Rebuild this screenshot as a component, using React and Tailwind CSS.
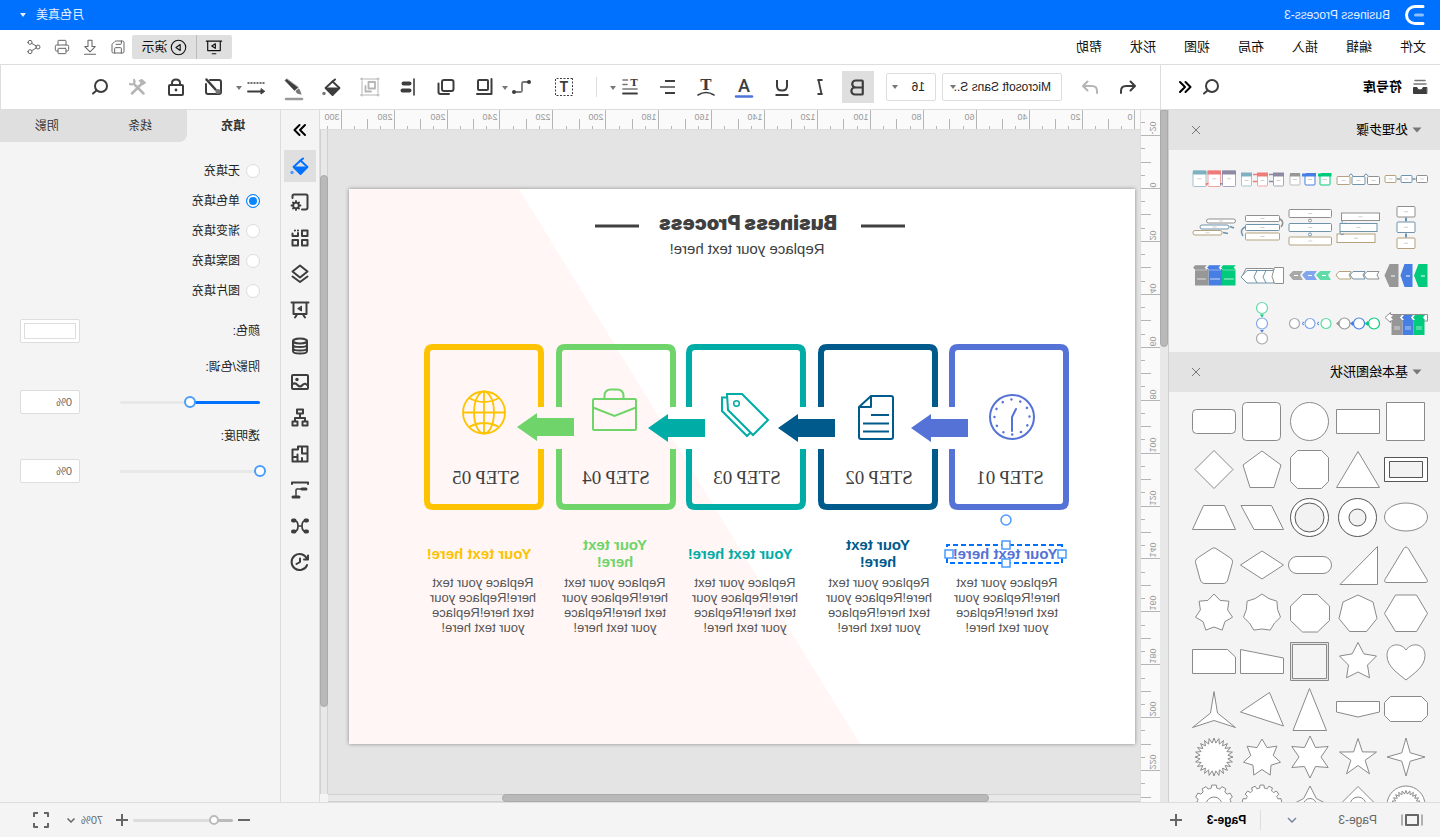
import React, { useState } from 'react';
import { Bold, Italic, Save, Printer, Share2 } from 'lucide-react';

const menus = ['文件', '编辑', '插入', '布局', '视图', '形状', '帮助'];
const fillTypes = ['无填充', '单色填充', '渐变填充', '图案填充', '图片填充'];

const Ico = ({ children, size = 20, className = '' }) => (
  <svg width={size} height={size} viewBox="0 0 20 20" fill="none" stroke="currentColor" strokeWidth="2" strokeLinecap="round" strokeLinejoin="round" className={`shrink-0 overflow-visible ${className}`}>
    {children}
  </svg>
);

const Caret = ({ className = '' }) => (
  <svg width="6" height="4" viewBox="0 0 6 4" fill="currentColor" className={`shrink-0 ${className}`}><path d="M0 0h6L3 4z" /></svg>
);

const SearchIcon = () => (
  <Ico><circle cx="9" cy="9" r="6" /><path d="m13.5 13.5 3.5 3" /></Ico>
);

const Bucket = ({ dot }) => (
  <Ico>
    <path d="m2.500 11 7-6.500 7 6.500-7 7z" strokeWidth="1.800" />
    <path d="M3 11h13l-6.500 7z" fill="currentColor" strokeWidth="1" />
    <path d="M7 2.500 10 5" />
    <circle cx="18" cy="16.500" r="1.700" fill={dot} stroke="none" />
  </Ico>
);

// ---------- top toolbar ----------

const tools = [
  { name: 'Bold', active: true, icon: <Bold size={21} strokeWidth={2.5} /> },
  { name: 'Italic', icon: <Ico><path d="M7.500 3h5M7.500 17h5" strokeWidth="1.800" strokeLinecap="butt" /><path d="M11.500 3 8.500 17" strokeWidth="1.800" /></Ico> },
  { name: 'Underline', icon: <Ico><path d="M5 3v6q0 4.500 5 4.500T15 9V3" strokeLinecap="butt" /><path d="M3.500 18h13" strokeLinecap="butt" /></Ico> },
  { name: 'Font color', icon: (
    <Ico>
      <text x="10" y="15" textAnchor="middle" fontFamily="Roboto" fontSize="18" fontWeight="500" fill="currentColor" stroke="none">A</text>
      <path d="M2 19.500h16" stroke="#4f73d9" strokeWidth="2.500" />
    </Ico>
  ) },
  { name: 'Text path', icon: (
    <Ico>
      <text x="10" y="13" textAnchor="middle" fontFamily="DejaVu Serif" fontSize="15" fontWeight="700" fill="currentColor" stroke="none">T</text>
      <path d="M2 18q8-5 16 0" strokeWidth="1.600" />
    </Ico>
  ) },
  { name: 'Align text', icon: <Ico><path d="M3 4h10M3 16h10" strokeLinecap="butt" /><path d="M3 10h15" stroke="#777" strokeLinecap="butt" /></Ico> },
  { name: 'Line spacing', caret: true, icon: (
    <Ico>
      <text x="6" y="9" textAnchor="middle" fontFamily="DejaVu Serif" fontSize="10" fontWeight="700" fill="currentColor" stroke="none">T</text>
      <path d="M12.500 3H17M13 7.500h4M3 12h14" stroke="#777" strokeWidth="1.600" />
      <path d="M3 16.500h14" strokeWidth="1.800" />
    </Ico>
  ) },
  { name: 'divider' },
  { name: 'Text box', icon: (
    <Ico>
      <rect x="1.500" y="1.500" width="17" height="17" strokeWidth="1" strokeDasharray="2 1.500" strokeLinecap="butt" />
      <text x="10" y="15" textAnchor="middle" fontFamily="Roboto" fontSize="14" fontWeight="700" fill="currentColor" stroke="none">T</text>
    </Ico>
  ) },
  { name: 'Connector', caret: true, spaced: true, icon: (
    <Ico>
      <path d="M4 5h4.500q1.500 0 1.500 1.500v7q0 1.500 1.500 1.500h6" stroke="#777" strokeWidth="1.800" />
      <g fill="currentColor" stroke="none"><circle cx="3" cy="5" r="2" /><circle cx="18" cy="15" r="2" /></g>
    </Ico>
  ) },
  { name: 'Bring forward', icon: <Ico><rect x="6" y="3" width="10" height="10" rx="1" /><path d="M2.500 2v15H17" /></Ico> },
  { name: 'Send backward', icon: <Ico><rect x="2.500" y="3" width="11.500" height="11" rx="2" /><path d="M17.500 6.500V15q0 2-2 2H7" /></Ico> },
  { name: 'Align', icon: (
    <Ico>
      <path d="M4 2v16" strokeWidth="1.600" />
      <path d="M8.500 6.500h6M8.500 13.500h7" strokeWidth="4" />
    </Ico>
  ) },
  { name: 'Group', faded: true, icon: (
    <Ico>
      <path d="M4 2h12M4 18h12M2 4v12M18 4v12" strokeWidth="1" />
      <g strokeWidth="1"><circle cx="2" cy="2" r="1" /><circle cx="18" cy="2" r="1" /><circle cx="2" cy="18" r="1" /><circle cx="18" cy="18" r="1" /></g>
      <path d="M5 5h6.500v6.500H5z" strokeWidth="1.800" />
      <path d="M14.500 9v5.500H9" strokeWidth="1.800" />
    </Ico>
  ) },
  { name: 'Fill', icon: <Bucket dot="#777" /> },
  { name: 'Line', icon: (
    <Ico>
      <path d="M17.500 2 19 3.500 9.500 13.500l-3.500-3z" fill="currentColor" strokeWidth="0.500" />
      <path d="M5.500 11.500 8.500 14c-.5 2.500-3 3.500-6.500 3.500 1.500-1.500 1-4 3.500-6z" fill="#777" stroke="none" />
      <path d="M2 22h16" stroke="#999" strokeWidth="2.500" />
    </Ico>
  ) },
  { name: 'Line style', caret: true, icon: (
    <Ico>
      <path d="M1.500 6h17" strokeWidth="1.600" strokeDasharray="2 1" strokeLinecap="butt" />
      <path d="M18 14.500H4" strokeWidth="1.800" />
      <path d="M5 12v5l-3.500-2.500z" fill="currentColor" strokeWidth="1" />
    </Ico>
  ) },
  { name: 'Style', spaced: true, icon: (
    <Ico>
      <path d="M14 3H5Q3 3 3 5v10q0 2 2 2h11q2 0 2-2V7" />
      <path d="M17.500 2.500 8.500 12.500" strokeWidth="2.500" />
      <circle cx="6" cy="14.500" r="2.500" fill="#777" stroke="none" />
    </Ico>
  ) },
  { name: 'Lock', icon: (
    <Ico>
      <rect x="3" y="8" width="14" height="10" rx="1" />
      <path d="M6 8V6q0-3.500 4-3.500T14 6v2" />
      <circle cx="10" cy="13" r="1.400" fill="currentColor" stroke="none" />
    </Ico>
  ) },
  { name: 'Tools', faded: true, icon: (
    <Ico>
      <path d="M5.500 6 16 16.500M13 8l-8.500 8.500" strokeWidth="2.500" />
      <path d="M2.500 5.500 6 2.500l3 1-3.500 4z" fill="currentColor" strokeWidth="1" />
      <path d="M14 3c-1.500 3 1 5.500 4 4" strokeWidth="2.200" />
    </Ico>
  ) },
  { name: 'Find', icon: <SearchIcon /> },
];

// ---------- symbol library ----------

const G = '#8f8f8f';
const S = '#6e93aa';
const T = '#b3a27d';
const GREEN = '#00ca7c';
const BLUE = '#477ee3';
const GRAY = '#979797';

const Box = ({ x, y, w, h, c, r = 1, f = '#fff' }) => (
  <g>
    <rect x={x} y={y} width={w} height={h} rx={r} fill={f} stroke={c} />
    <path d={`M${x + w / 2 - 2} ${y + h / 2}h4`} stroke="#bbb" strokeWidth="0.700" />
  </g>
);

const Ring = ({ x, y, c, r = 5.5 }) => <circle cx={x} cy={y} r={r} fill="#fff" stroke={c} strokeWidth="1.200" />;

const processShapes = [
  <g><Box x={2.5} y={20.5} w={11} h={7} c={G} /><Box x={18} y={20.5} w={11} h={7} c={S} /><Box x={34} y={20.5} w={11} h={7} c={T} /><path d="M14.500 24h3M30 24h3" stroke={S} strokeWidth="1.500" /></g>,
  <g><Box x={2.5} y={21.500} w={12} h={8} c={G} /><Box x={17} y={21.500} w={13} h={8} c={S} /><Box x={32} y={21.500} w={13} h={8} c={T} /><path d="M14 21q2-4 4 0M29 21q2-4 4 0" stroke={S} fill="none" /></g>,
  <g>
    <Box x={4} y={19} w={10} h={11} c={GREEN} /><Box x={19} y={19} w={10} h={11} c={BLUE} /><Box x={34} y={19} w={10} h={11} c="#bbb" />
    <path d="M2.500 18h10v3.500h-10zM12 18.500h4v3h-4z" fill={GREEN} /><path d="M18 18h10v3.500H18zM27 18.500h5v3h-5z" fill={BLUE} /><path d="M34 18h10v3.500H34z" fill={GRAY} />
  </g>,
  <g>
    <Box x={2.5} y={20} w={10} h={11} c="#a9a5b8" /><Box x={18.500} y={20} w={10} h={11} c="#f2a3a1" /><Box x={34.500} y={20} w={10} h={11} c="#a3c3d1" />
    <path d="M2 17.500h11v4H2z" fill="#8f8aa3" /><path d="M18 17.500h11v4H18z" fill="#ef7b78" /><path d="M34 17.500h11v4H34z" fill="#7fb0c2" />
    <path d="M13 19.500h4M13 26.500h4" stroke="#8f8aa3" strokeWidth="1.500" /><path d="M29 19.500h4M29 26.500h4" stroke="#ef7b78" strokeWidth="1.500" />
  </g>,
  <g>
    <Box x={2.5} y={16} w={13} h={15.500} c="#a9a5b8" /><Box x={17.500} y={16} w={12.500} h={15.500} c="#f2a3a1" /><Box x={32} y={16} w={13} h={15.500} c="#a3c3d1" />
    <path d="M2 15.500h14v4H2z" fill="#8f8aa3" /><path d="M17 15.500h13.500v4H17z" fill="#ef7b78" /><path d="M31.500 15.500H45v4H31.500z" fill="#7fb0c2" />
    <path d="M15 28h3v3z" fill="#8f8aa3" /><path d="M29 28h3v3z" fill="#ef7b78" />
  </g>,
  <g><Box x={15} y={3.500} w={18} h={10.500} c={G} /><Box x={15} y={19} w={18} h={10.500} c={S} /><Box x={15} y={35} w={18} h={10.500} c={T} /><path d="M24 14.500v4M24 30.500v4" stroke={S} strokeWidth="2" /></g>,
  <g><Box x={2.5} y={10} w={38} h={7.500} c={G} r={0} /><Box x={5} y={20.500} w={37} h={8} c={S} r={0} /><Box x={7} y={31} w={38} h={8.500} c={T} r={0} /><path d="M36 20q4 2 4-2M38 31q4 2 4-2" stroke={S} fill="none" /></g>,
  <g><Box x={2.5} y={6.500} w={42.500} h={8} c={G} /><Box x={2.5} y={20.500} w={42.500} h={8} c={S} /><Box x={2.5} y={34} w={42.500} h={8} c={T} /><circle cx="24" cy="17.500" r="1.500" fill="#fff" stroke={G} /><circle cx="24" cy="31.500" r="1.500" fill="#fff" stroke={S} /></g>,
  <g><Box x={6.500} y={12.500} w={34} h={6} c={G} /><Box x={6.500} y={21.500} w={34} h={6} c={S} /><Box x={6.500} y={30} w={34} h={7} c={T} /><path d="M6 16q-5 3-1 8" stroke={G} fill="none" strokeWidth="1.500" /><path d="M41 24q6 3 2 9" stroke={S} fill="none" strokeWidth="1.500" /></g>,
  <g><Box x={2.5} y={16} w={29} h={4} c={G} r={2} /><Box x={9} y={22} w={29} h={4} c={S} r={2} /><Box x={16} y={27.500} w={29} h={4.500} c={T} r={2} /><path d="M4 25l4-1.500M10 30.500l5-1" stroke={S} strokeWidth="1.500" /></g>,
  <g><path d="M2.500 13h9l4.500 11.500-4.500 11.500h-9z" fill={GREEN} /><path d="M17.500 13h8l4 11.500-4 11.500h-8z" fill={BLUE} /><path d="M31.500 13h9l5 11.500-5 11.500h-9z" fill={GRAY} /><path d="M5 25h4M20 25h4M35 25h4" stroke="#fff" /></g>,
  <g fill="#fff"><path d="M3 20.500h12l3 3.500-3 4H3l2-4z" stroke={G} /><path d="M17 20.500h12l3 3.500-3 4H17l2-4z" stroke={S} /><path d="M31 20.500h12l3 3.500-3 4H31l2-4z" stroke={T} /></g>,
  <g><path d="M3 20h11l4 4-4 5H3l3-5z" fill="#5fdca7" /><path d="M17 20h11l4 4-4 5H17l3-5z" fill="#7fa6ee" /><path d="M31 20h10l4 4-4 5H31l3-5z" fill="#a8a8a8" /><path d="M8 24.500h4M22 24.500h4M36 24.500h4" stroke="#fff" /></g>,
  <g fill="#fff"><path d="M13 17.500h27l4 8H11z" stroke={G} /><path d="M12 19.500h27l6 6.500-6 6H12z" stroke={S} /><path d="M2.500 16.500h9l2.500 9-2.500 7h-9z" stroke={G} /><path d="m20 19.500 3 6.500-3 6M29 19.500l3 6.500-3 6" fill="none" stroke={S} /></g>,
  <g><path d="M2.500 18h13.500v16.500H2.500z" fill={GREEN} /><path d="M16 18h13.500v16.500H16z" fill={BLUE} /><path d="M29.500 18H43v16.500H29.500z" fill={GRAY} /><path d="M2 14h13l2 2.500-2 2.500H2l2-2.500z" fill={GREEN} stroke="#fff" strokeWidth=".4" /><path d="M17 14h12l2 2.500-2 2.500H17l2-2.500z" fill={BLUE} stroke="#fff" strokeWidth=".4" /><path d="M31 14h12l2 2.500-2 2.500H31l2-2.500z" fill={GRAY} stroke="#fff" strokeWidth=".4" /><path d="M4 28h10M18 28h10M32 28h9" stroke="#fff" strokeWidth=".7" /></g>,
  <g><path d="M2.500 15.500h37v-2l5.500 5-5.500 5v-1.500h-37z" fill="#fff" stroke={G} /><path d="M5.500 21h11v15h-11z" fill={GREEN} /><path d="M16.500 21h11v15h-11z" fill={BLUE} /><path d="M27.500 21h11v15h-11z" fill={GRAY} /><path d="M5 16h10l2 2.500-2 2.500H5l2-2.500z" fill={GREEN} /><path d="M17 16h9l2 2.500-2 2.500h-9l2-2.500z" fill={BLUE} /><path d="M28 16h9l2 2.500-2 2.500h-9l2-2.500z" fill={GRAY} /><path d="M8 28h6M8 30h6M19 28h6M19 30h6M30 28h6M30 30h6" stroke="#fff" strokeWidth=".6" /></g>,
  <g><Ring x={8} y={24.500} c={GREEN} /><Ring x={23} y={24.500} c={BLUE} /><Ring x={37.500} y={24.500} c={GRAY} /><path d="m14 22 3.500 2.500L14 27z" fill={GREEN} /><path d="m29 22 3 2.500-3 2.500z" fill={BLUE} /><path d="m43 22 3 2.500-3 2.500z" fill={GRAY} /></g>,
  <g><Ring x={8} y={24.500} c="#5fdca7" r={5} /><Ring x={24} y={24.500} c="#7fa6ee" r={5} /><Ring x={39.500} y={24.500} c="#aaa" r={5} /><path d="m15 23 2 1.500-2 1.500M30 23l2 1.500-2 1.500" stroke={BLUE} fill="none" /></g>,
  <g><Ring x={24} y={9} c="#5fdca7" /><Ring x={24} y={24.500} c="#7fa6ee" /><Ring x={24} y={39.500} c="#aaa" /><path d="M22 15.500h4l-2 3z" fill={GREEN} /><path d="M22 31h4l-2 2.500z" fill={BLUE} /></g>,
];

const star = (n, outer, inner, cy = 24) => {
  const pts = [];
  for (let i = 0; i < n * 2; i++) {
    const r = i % 2 ? inner : outer;
    const a = (Math.PI * i) / n - Math.PI / 2;
    pts.push(`${(24 + r * Math.cos(a)).toFixed(1)},${(cy + r * Math.sin(a)).toFixed(1)}`);
  }
  return pts.join(' ');
};

const gear = (n) => {
  const pts = [];
  for (let i = 0; i < n; i++) {
    [[-0.5, 17], [-0.32, 17], [-0.22, 20], [0.22, 20], [0.32, 17]].forEach(([o, r]) => {
      const a = ((i + o) / n) * Math.PI * 2 - Math.PI / 2;
      pts.push(`${(24 + r * Math.cos(a)).toFixed(1)},${(24 + r * Math.sin(a)).toFixed(1)}`);
    });
  }
  return pts.join(' ');
};

const basicShapes = [
  <rect x="5.500" y="5.500" width="38" height="38" />,
  <rect x="2.500" y="12.500" width="43" height="24" />,
  <circle cx="24.500" cy="24.500" r="19" />,
  <rect x="5.500" y="5.500" width="38" height="38" rx="4" />,
  <rect x="2.500" y="12.500" width="43" height="24" rx="4" />,
  <g stroke="#555"><rect x="2.500" y="12.500" width="43" height="24" /><rect x="7.500" y="16.500" width="33" height="16" fill="#f2f2f2" /></g>,
  <path d="M2.500 42.500 24 6.500l21.500 36z" />,
  <path d="M12.500 5.500h24l7 7v24l-7 7h-24l-7-7v-24z" />,
  <path d="m24 6 19 14-7 22.500H12L5 20z" />,
  <path d="m24 5.500 19 19-19 19-19-19z" />,
  <ellipse cx="24" cy="24" rx="21.500" ry="14" />,
  <g stroke="#555"><circle cx="24.500" cy="24.500" r="19" /><circle cx="24.500" cy="24.500" r="8.500" fill="#f2f2f2" /></g>,
  <g stroke="#555"><circle cx="24.500" cy="24.500" r="19" /><circle cx="24.500" cy="24.500" r="14.500" fill="#f2f2f2" /></g>,
  <path d="M45 12.500H14.500L2.500 36.500H32z" />,
  <path d="M13.500 12.500h21l11 24h-43z" />,
  <path d="M26.500 8 45 38.500q1.500 3-2 3H5q-3.500 0-2-3L21.500 8q2.500-4 5 0z" />,
  <path d="M4.500 5.500v38H42z" />,
  <rect x="2.500" y="15.500" width="43" height="17" rx="8.500" />,
  <path d="m24 10 21.500 14L24 38 2.500 24z" />,
  <path d="M26 7.500 40.500 17q2.500 2 2 4.500L38 38q-1 4.500-5 4.500H15q-4 0-5-4.500L5.500 21.500q-.5-2.500 2-4.500L22 7.500q2-1.500 4 0z" />,
  <path d="M13.500 6h21l11 18.500-11 18h-21l-11-18z" />,
  <path d="m24 6 15 7 4 16.500L32.500 42.500h-17L5 29.500 9 13z" />,
  <path d="M16.500 5.500h15l12 11.500v14.500l-12 11.500h-15l-12-11.500V17z" />,
  <polygon points={star(7, 19, 16)} />,
  <polygon points={star(7, 19, 14)} />,
  <path d="M24 43C17 37 5 30 5 18.500 5 6 19 5 24 13 29 5 43 6 43 18.500 43 30 31 37 24 43z" />,
  <polygon points={star(5, 19.5, 10, 25)} />,
  <g><rect x="5.500" y="5.500" width="38" height="38" fill="#e4e4e4" /><rect x="7.500" y="7.500" width="34" height="34" fill="#f4f4f4" /></g>,
  <path d="M45.500 12.500 2.500 21v15.500h43z" />,
  <path d="M10.500 12.500h35v24h-43V20z" />,
  <path d="M8.500 11.500h31l6 6v13l-6 6h-31l-6-6v-13z" />,
  <path d="M2.500 16.500h43v10.500L24 32 2.500 27z" />,
  <path d="M24.500 3.500 41 45.500H7.500z" />,
  <path d="M16.500 7.500 2.500 41l43-14z" />,
  <path d="m24 6.500 3.500 21.500 18 14.500L24 35.500 2.500 42.500l18-14.500z" />,
  <polygon points={star(4, 19, 6)} />,
  <polygon points={star(5, 19.5, 7.5, 25)} />,
  <polygon points={star(6, 21, 11)} />,
  <polygon points={star(7, 19, 11.5, 25)} />,
  <polygon points={star(24, 19, 14)} />,
  <g><circle cx="24" cy="24" r="19" /><polygon points={star(24, 14.5, 11)} /></g>,
  <g><path d="m24 5.500 19 19-19 19-19-19z" /><circle cx="24" cy="24" r="8" /></g>,
  <g><polygon points={star(4, 19, 9)} /><circle cx="24" cy="24" r="6.500" /></g>,
  <polygon points={gear(14)} />,
  <g><polygon points={gear(12)} /><circle cx="24" cy="24" r="8" /></g>,
];

const Section = ({ title, children }) => (
  <section>
    <div className="flex h-10 items-center bg-[#e3e3e3] pl-[18px] pr-[22px] text-[#777]">
      <svg width="10" height="6" viewBox="0 0 10 6" fill="currentColor"><path d="M.500.500h9L5 5.500z" /></svg>
      <h3 className="ml-1 text-[13px] text-black">{title}</h3>
      <button aria-label="close" className="ml-auto">
        <svg width="10" height="10" viewBox="0 0 10 10" stroke="currentColor"><path d="m1 1 8 8M9 1 1 9" /></svg>
      </button>
    </div>
    <div className="flex flex-wrap py-[5px] pl-2.5">{children}</div>
  </section>
);

const Library = () => (
  <aside className="flex w-[280px] shrink-0 bg-[#f4f4f4]">
    <div className="flex-1 overflow-hidden">
      <Section title="处理步骤">
        {processShapes.map((shape, i) => (
          <svg key={i} width="48" height="48" viewBox="0 0 48 48">{shape}</svg>
        ))}
      </Section>
      <Section title="基本绘图形状">
        {basicShapes.map((shape, i) => (
          <svg key={i} width="48" height="48" viewBox="0 0 48 48" fill="#fff" stroke="#8a8a8a" strokeLinejoin="round">{shape}</svg>
        ))}
      </Section>
    </div>
    <div className="w-[9px] border-l border-[#d0d0d0] bg-[#e8e8e8]">
      <div className="h-[237px] rounded-b border border-[#aaa] bg-[#b9b9b9]" />
    </div>
  </aside>
);

// ---------- rulers ----------

const STEP = 13.23; // 5 mm at 70% zoom

const HRuler = () => (
  <svg className="block h-5 w-full shrink-0 border-b border-[#ddd] bg-[#fafafa]" stroke="#b5b5b5">
    {Array.from({ length: 62 }, (_, k) => {
      const x = Math.round(4.5 + k * STEP) + 0.5;
      const top = k % 4 === 0 ? 0 : k % 2 === 0 ? 9 : 16;
      return (
        <g key={k}>
          <path d={`M${x} ${top}V20`} />
          {k % 4 === 0 && <text x={x + 2} y="10" fontSize="9" fill="#999" stroke="none">{k * 5}</text>}
        </g>
      );
    })}
  </svg>
);

const VRuler = () => (
  <svg className="block w-5 shrink-0 self-stretch border-r border-[#ddd] bg-[#fafafa]" stroke="#b5b5b5">
    {Array.from({ length: 52 }, (_, i) => {
      const k = i - 5;
      const y = Math.round(78 + k * STEP) + 0.5;
      const left = k % 4 === 0 ? 0 : k % 2 === 0 ? 9 : 15;
      return (
        <g key={k}>
          <path d={`M${left} ${y}H20`} />
          {k % 4 === 0 && <text transform={`translate(10 ${y - 1}) rotate(-90)`} fontSize="9" fill="#999" stroke="none">{k * 5}</text>}
        </g>
      );
    })}
  </svg>
);

// ---------- page ----------

const steps = [
  { no: 'STEP 01', color: '#5572d6', x: 66, label: 125, head: 130, body: 128, lines: ['Your text here!'] },
  { no: 'STEP 02', color: '#005a8c', x: 197, label: 256, head: 257, body: 256, lines: ['Your text', 'here!'] },
  { no: 'STEP 03', color: '#00aca6', x: 329, label: 388, head: 395, body: 390, lines: ['Your text here!'] },
  { no: 'STEP 04', color: '#6fd469', x: 459, label: 519, head: 520, body: 520, lines: ['Your text', 'here!'] },
  { no: 'STEP 05', color: '#fdc300', x: 591, label: 649, head: 656, body: 652, lines: ['Your text here!'] },
];
const bodyLines = ['Replace your text', 'here!Replace your', 'text here!Replace', 'your text here!'];

const framePath = (i) => {
  const left = i === 0 ? 'M3 105V9' : 'M3 63V9';
  const right = i === 4 ? 'V105' : 'V63';
  return `${left}q0-6 6-6H111q6 0 6 6${right}M3 105V157q0 6 6 6H111q6 0 6-6V105`;
};

const PageArt = () => (
  <svg className="absolute inset-0" width="786" height="555" viewBox="0 0 786 555" fill="none">
    <path d="M616 0H786V555H275z" fill="#fff6f5" />
    <path d="M230 37h44M496 37h44" stroke="#404040" strokeWidth="3" />
    {steps.map((s, i) => (
      <g key={s.no}>
        <path transform={`translate(${s.x} 155)`} d={framePath(i)} stroke={s.color} strokeWidth="6" />
        {i < 4 && <path transform={`translate(${[167, 300, 430, 561][i]} ${i === 3 ? 224 : 225})`} d="M0 5h37V0l20 14-20 14v-5H0z" fill={s.color} />}
      </g>
    ))}
    {/* clock */}
    <g stroke="#5572d6" strokeWidth="2" strokeLinecap="round">
      <circle cx="123" cy="228" r="22" />
      <path d="M123 242v-14l-4-8" />
      <circle cx="123" cy="228" r="17.500" strokeWidth="2.400" strokeDasharray="0.100 9.063" />
    </g>
    {/* document */}
    <g stroke="#005a8c" strokeWidth="2" strokeLinejoin="round">
      <path d="M264 207h-20q-2 0-2 2v39q0 2 2 2h30q2 0 2-2v-30z" />
      <path d="M264 207v11h12M246 226h18M246 234.500h26M246 242.500h26" />
    </g>
    {/* tags */}
    <g stroke="#00aca6" strokeWidth="2">
      <path d="M408 205h-15l-26 26 15 15 25-25z" />
      <path d="M408 208.500h5V222l-25 25-3-3" />
      <circle cx="398.500" cy="214.500" r="2.800" strokeWidth="1.500" />
    </g>
    {/* briefcase */}
    <g stroke="#6fd469" strokeWidth="2">
      <rect x="499" y="210" width="43" height="31" rx="1" />
      <path d="M499 218.500 520.500 227l21.500-8.500M511.500 210v-3q0-6.500 6.500-6.500h6q6.500 0 6.500 6.500v3" />
    </g>
    {/* globe */}
    <g stroke="#fdc300" strokeWidth="1.800">
      <circle cx="651" cy="223.500" r="21" />
      <ellipse cx="651" cy="223.500" rx="10" ry="21" />
      <path d="M651 202v43M630 223.500h42M636 209q15 8 30 0M636 238q15-8 30 0" />
    </g>
  </svg>
);

const Page = () => (
  <div className="relative mx-[5px] mt-[59px] h-[555px] w-[786px] overflow-hidden bg-white shadow-[0_0_4px_rgba(0,0,0,0.4)]">
    <PageArt />
    <h1 className="absolute left-[387px] top-[22px] -translate-x-1/2 whitespace-nowrap font-[Inter] text-[20px] font-black leading-6 text-[#404040]">Business Process</h1>
    <p className="absolute left-[388px] top-[50px] -translate-x-1/2 whitespace-nowrap text-[15px] leading-5 text-[#404040]">Replace your text here!</p>
    {steps.map((s) => (
      <React.Fragment key={s.no}>
        <p className="absolute top-[277px] -translate-x-1/2 whitespace-nowrap font-['Liberation_Serif'] text-[19px] leading-6 text-[#404040]" style={{ left: s.label }}>{s.no}</p>
        <h2 className="absolute top-[347px] flex h-[34px] -translate-x-1/2 flex-col justify-center whitespace-nowrap text-center text-[15px] font-bold leading-[17px]" style={{ left: s.head, color: s.color }}>
          {s.lines.map((l) => <span key={l}>{l}</span>)}
        </h2>
        <p className="absolute top-[386px] -translate-x-1/2 whitespace-nowrap text-center text-[13px] leading-[15px] text-[#555]" style={{ left: s.body }}>
          {bodyLines.map((l) => <span key={l} className="block">{l}</span>)}
        </p>
      </React.Fragment>
    ))}
    {/* selection handles */}
    <svg className="absolute left-[66px] top-[324px]" width="130" height="58" viewBox="0 0 130 58" fill="#fff" stroke="#4a9bff" strokeWidth="1.500">
      <rect x="7" y="32" width="115" height="18" fill="none" stroke="#0070ff" strokeWidth="2" strokeDasharray="5 3" />
      <circle cx="63" cy="7" r="5" />
      <rect x="59" y="28" width="8" height="8" />
      <rect x="59" y="46" width="8" height="8" />
      <rect x="3" y="37" width="8" height="8" />
      <rect x="116" y="37" width="8" height="8" />
    </svg>
  </div>
);

// ---------- right side ----------

const sideTools = [
  { name: 'Fill', icon: <Bucket dot="#4a9bff" /> },
  { name: 'Settings', icon: <Ico><path d="M17.500 6V4q0-1.500-1.500-1.500H4Q2.500 2.500 2.500 4v11.500q0 2 2 2H8" /><circle cx="14" cy="13.500" r="2.800" strokeWidth="1.800" /><path d="M14 9v1.500M14 16.500V18M9.500 13.500H11M17 13.500h1.500M11 10.500l.8.8M17 10.500l-.8.8M11 16.500l.8-.8M17 16.500l-.8-.8" strokeWidth="1.800" /></Ico> },
  { name: 'Components', icon: <Ico><rect x="2.500" y="2.500" width="5.500" height="5.500" /><rect x="2.500" y="12" width="5.500" height="5.500" /><rect x="12" y="12" width="5.500" height="5.500" /><path d="M12 5v3h5.500V5.500" /><path d="M12 2.500h6" strokeDasharray="0.100 2.900" /></Ico> },
  { name: 'Layers', icon: <Ico><path d="m10 1.500 7.500 6L10 13.500 2.500 7.500z" /><path d="m2.500 12.500 7.500 5.500 7.500-5.500" /></Ico> },
  { name: 'Presentation', icon: <Ico><path d="M1.500 2.500h17M3.500 3v11h13V3M7 14.500l-2 3M13 14.500l2 3" /><path d="M8.500 6.500v4.500l3.500-2.200z" fill="currentColor" strokeWidth="1" /></Ico> },
  { name: 'Data', icon: <Ico><ellipse cx="10" cy="5" rx="7" ry="2.500" /><path d="M3 5v10q0 2.500 7 2.500t7-2.500V5M3 8.500Q3 11 10 11t7-2.500M3 12q0 2.500 7 2.500t7-2.500" /></Ico> },
  { name: 'Image', icon: <Ico><rect x="2" y="3" width="16" height="14" rx="1" /><circle cx="13" cy="7.500" r="1.700" fill="currentColor" stroke="none" /><path d="M2 14q3-4 5.500-1t5 0 5.500-.5" /></Ico> },
  { name: 'Org chart', icon: <Ico><path d="M7 1.500h6v4H7zM2.500 13.500h5v4h-5zM12.500 13.500h5v4h-5zM10 6v4M5 13v-3h10v3" /></Ico> },
  { name: 'Floor plan', icon: <Ico><path d="M2.500 2.500H12v3h5.500v12h-15zM8 3v6M2.500 9.500H8M8 17v-3M12.500 10.500v6.500M12.500 13h5" /></Ico> },
  { name: 'Outline', icon: <Ico><path d="M2 4V2.500h16V4" /><path d="M4 9h4" strokeWidth="3" /><path d="M9 9h4q1 0 1 1v6" strokeWidth="1.500" /><path d="M11 17h6" strokeWidth="3" /></Ico> },
  { name: 'Mind map', icon: <Ico><path d="M4 4.500Q8 4.500 8 10T4 15.500M16 4.500Q12 4.500 12 10t4 5.500M8 10h4" strokeWidth="1.700" /><path d="M3 4.500h1.500M3 15.500h1.500M15.500 4.500H17M15.500 15.500H17" strokeWidth="4" /></Ico> },
  { name: 'History', icon: <Ico><path d="M3 7a8 8 0 1 1 0 6" /><path d="M2 3.500V7.500h4" /><path d="M10 6.500V10l3.500 2" /></Ico> },
];

const SideBar = () => (
  <nav className="flex w-10 shrink-0 flex-col items-center gap-1 border-x border-[#ddd] bg-[#f4f4f4] pt-1 text-[#3d3d3d]">
    <button aria-label="collapse" className="flex size-8 items-center justify-center text-black">
      <Ico><path d="m5 5 5 5-5 5M10.500 5l5 5-5 5" /></Ico>
    </button>
    {sideTools.map((t, i) => (
      <button key={t.name} aria-label={t.name} className={`flex size-8 items-center justify-center ${i === 0 ? 'bg-[#dfdfdf] text-[#0070ff]' : ''}`}>{t.icon}</button>
    ))}
  </nav>
);

const Slider = ({ id, value, onChange }) => (
  <div className="relative flex h-6 w-[140px] items-center">
    <div className="h-[3px] w-full rounded bg-[#e8e8e8]">
      <div className="h-full rounded bg-[#0070ff]" style={{ width: `${value}%` }} />
    </div>
    <input
      id={id}
      type="range"
      value={value}
      onChange={(e) => onChange(Number(e.target.value))}
      className="absolute -left-1.5 w-[152px] appearance-none bg-transparent [&::-webkit-slider-thumb]:size-3 [&::-webkit-slider-thumb]:appearance-none [&::-webkit-slider-thumb]:rounded-full [&::-webkit-slider-thumb]:border-2 [&::-webkit-slider-thumb]:border-[#4a9dfc] [&::-webkit-slider-thumb]:bg-white"
    />
  </div>
);

const FillPanel = () => {
  const [fill, setFill] = useState('单色填充');
  const [shade, setShade] = useState(50);
  const [opacity, setOpacity] = useState(0);

  return (
    <aside className="w-[280px] shrink-0 bg-[#f4f4f4] text-xs">
      <div className="flex h-8 text-[#333]">
        <button className="flex-1 font-bold">填充</button>
        <button className="flex-1 rounded-bl-lg bg-[#dfdfdf]">线条</button>
        <button className="flex-1 bg-[#dfdfdf]">阴影</button>
      </div>
      <div className="px-5 pt-3.5 text-[#222]">
        {fillTypes.map((f) => (
          <label key={f} className="flex h-[30px] items-center gap-1.5">
            <input
              type="radio"
              name="fill"
              checked={fill === f}
              onChange={() => setFill(f)}
              className="size-3.5 appearance-none rounded-full border border-[#ddd] bg-white checked:border-[#0a84ff] checked:bg-[#0a84ff] checked:shadow-[inset_0_0_0_2px_#fff]"
            />
            {f}
          </label>
        ))}
        <div className="mt-[11px] flex h-7 items-center justify-between">
          <label htmlFor="color">颜色:</label>
          <button id="color" className="h-6 w-[60px] rounded-xs border border-[#ddd] bg-white p-[3px]">
            <span className="block h-full border border-[#ddd]" />
          </button>
        </div>
        <label htmlFor="shade" className="mt-3 block leading-5">阴影/色调:</label>
        <div className="mt-[13px] flex items-center justify-between">
          <Slider id="shade" value={shade} onChange={setShade} />
          <input aria-label="shade value" defaultValue="0%" className="h-6 w-[60px] rounded-xs border border-[#ddd] bg-white px-[7px] text-[11px] text-[#666]" />
        </div>
        <label htmlFor="opacity" className="mt-3 block leading-5">透明度:</label>
        <div className="mt-[13px] flex items-center justify-between">
          <Slider id="opacity" value={opacity} onChange={setOpacity} />
          <input aria-label="opacity value" defaultValue="0%" className="h-6 w-[60px] rounded-xs border border-[#ddd] bg-white px-[7px] text-[11px] text-[#666]" />
        </div>
      </div>
    </aside>
  );
};

// ---------- bars ----------

const TitleBar = () => (
  <header className="flex h-[30px] shrink-0 items-center bg-[#0070ff] pl-[15px] pr-5 text-xs text-white/90">
    <svg width="20" height="20" viewBox="0 0 20 20" fill="none" strokeWidth="3" strokeLinecap="round">
      <path d="M2 1.500h8a8.500 8.500 0 0 1 0 17H2" stroke="#fff" />
      <path d="M2.500 10h7" stroke="#8cc0ff" />
    </svg>
    <span className="ml-[15px]">Business Process-3</span>
    <span className="ml-auto">月色真美</span>
    <Caret className="ml-2.5" />
  </header>
);

const MenuBar = () => (
  <div className="flex h-[35px] shrink-0 items-center border-b border-[#ddd] bg-white pl-3.5 pr-[26px]">
    <nav className="flex gap-7 text-[13px] text-[#111]">
      {menus.map((m) => <button key={m}>{m}</button>)}
    </nav>
    <div className="ml-auto flex items-center gap-2.5 text-[#666]">
      <div className="flex h-6 rounded-xs bg-[#dfdfdf] text-[13px] text-[#111]">
        <button aria-label="slides" className="flex w-9 items-center justify-center border-r border-[#bbb]">
          <Ico size={18}>
            <path d="M1.500 3.500h17M3 4v10h14V4M8 17.500h4" strokeWidth="1.300" />
            <path d="M8.500 6.500v5l4-2.500z" strokeWidth="1.300" />
          </Ico>
        </button>
        <button className="flex w-16 items-center justify-center gap-0.5">
          <Ico size={17}>
            <circle cx="10" cy="10" r="8.500" strokeWidth="1.300" />
            <path d="M8 6.500v7l5-3.500z" strokeWidth="1.300" />
          </Ico>
          演示
        </button>
      </div>
      <div className="-ml-1 flex gap-3">
        <button aria-label="save"><Save size={16} strokeWidth={1.5} /></button>
        <button aria-label="download">
          <Ico size={16}><path d="M7.500 1.500h5v8h4L10 16 3.500 9.500h4zM3 19h14" strokeWidth="1.300" /></Ico>
        </button>
        <button aria-label="print"><Printer size={16} strokeWidth={1.5} /></button>
        <button aria-label="share"><Share2 size={16} strokeWidth={1.5} /></button>
      </div>
    </div>
  </div>
);

const ToolBar = () => (
  <div className="flex h-[45px] shrink-0 border-b border-[#ddd] bg-white text-[#3d3d3d]">
    <div className="flex w-[280px] shrink-0 items-center border-r border-[#ddd] pl-2.5 pr-3.5">
      <Ico>
        <path d="M5 3.500h10M4 7h12" stroke="#777" strokeWidth="1.500" />
        <path d="M3.500 10.500h3.500q0 2.500 3 2.500t3-2.500h3.500v6h-13z" fill="currentColor" strokeWidth="1" />
      </Ico>
      <h2 className="ml-2 text-[13px] font-bold text-black">符号库</h2>
      <button aria-label="search" className="ml-auto"><SearchIcon /></button>
      <button aria-label="collapse" className="ml-1.5 text-black">
        <Ico><path d="m9.500 5-5 5 5 5M15 5l-5 5 5 5" /></Ico>
      </button>
    </div>
    <div className="flex flex-1 items-center border-r border-[#ddd] pl-[22px]">
      <button aria-label="undo"><Ico><path d="M7.500 4.500 3 9l4.500 4.500M3.500 9H12q5 0 5 5v2" /></Ico></button>
      <button aria-label="redo" className="ml-[18px] text-[#b5b5b5]"><Ico><path d="M12.500 4.500 17 9l-4.500 4.500M16.500 9H8q-5 0-5 5v2" /></Ico></button>
      <div className="relative ml-[18px]">
        <select aria-label="font" className="h-7 w-[120px] appearance-none rounded-xs border border-[#ddd] bg-white pl-2.5 text-xs text-[#222]">
          <option>Microsoft Sans S..</option>
        </select>
        <Caret className="absolute right-2 top-3 text-[#777]" />
      </div>
      <div className="relative ml-1.5">
        <select aria-label="font size" className="h-7 w-[50px] appearance-none rounded-xs border border-[#ddd] bg-white pl-2.5 text-xs text-[#222]">
          <option>16</option>
        </select>
        <Caret className="absolute right-1.5 top-3 text-[#777]" />
      </div>
      <div className="ml-3 flex gap-1.5">
        {tools.map((t) => {
          if (t.name === 'divider') {
            return <div key={t.name} className="flex w-[22px] items-center justify-center"><span className="h-5 w-px bg-[#ddd]" /></div>;
          }
          return (
            <button key={t.name} aria-label={t.name} className={`relative flex size-8 items-center justify-center ${t.active ? 'bg-[#dfdfdf]' : ''} ${t.faded ? 'text-[#b5b5b5]' : ''} ${t.spaced ? 'ml-1' : ''}`}>
              {t.icon}
              {t.caret && <Caret className="absolute -right-1 top-[15px] text-[#777]" />}
            </button>
          );
        })}
      </div>
    </div>
  </div>
);

const StatusBar = () => (
  <footer className="flex h-[35px] shrink-0 items-center border-t border-[#ddd] bg-[#f4f4f4] pl-[18px] pr-[31px] text-xs text-[#666]">
    <Ico><path d="M0 5v10M20 5v10" stroke="#999" strokeWidth="1.500" /><rect x="4" y="5" width="12" height="10" /></Ico>
    <button className="ml-[25px]">Page-3</button>
    <button aria-label="pages" className="ml-[41px] text-[#7c86a0]">
      <svg width="10" height="6" viewBox="0 0 10 6" fill="none" stroke="currentColor" strokeWidth="1.500"><path d="m1 1 4 4 4-4" /></svg>
    </button>
    <span className="ml-[26px] h-5 w-px bg-[#ddd]" />
    <button className="ml-3.5 font-bold text-black">Page-3</button>
    <button aria-label="add page" className="ml-6">
      <svg width="14" height="14" viewBox="0 0 14 14" stroke="currentColor" strokeWidth="2"><path d="M7 1v12M1 7h12" /></svg>
    </button>
    <div className="ml-auto flex items-center">
      <button aria-label="zoom out"><svg width="14" height="14" viewBox="0 0 14 14" stroke="currentColor" strokeWidth="2"><path d="M1 7h12" /></svg></button>
      <input
        aria-label="zoom"
        type="range"
        defaultValue="16"
        className="mx-1 h-[3px] w-[100px] appearance-none rounded bg-linear-to-r from-[#bbb] from-20% to-[#ddd] to-20% [&::-webkit-slider-thumb]:size-2.5 [&::-webkit-slider-thumb]:appearance-none [&::-webkit-slider-thumb]:rounded-full [&::-webkit-slider-thumb]:border-2 [&::-webkit-slider-thumb]:border-[#bbb] [&::-webkit-slider-thumb]:bg-white"
      />
      <button aria-label="zoom in"><svg width="14" height="14" viewBox="0 0 14 14" stroke="currentColor" strokeWidth="2"><path d="M7 1v12M1 7h12" /></svg></button>
      <button className="ml-3 flex items-center gap-1.5 text-[11px]">
        70%
        <svg width="8" height="5" viewBox="0 0 8 5" fill="none" stroke="currentColor" strokeWidth="1.500"><path d="m.500.500 3.500 3.500L7.500.500" /></svg>
      </button>
      <button aria-label="full screen" className="ml-4">
        <Ico><path d="M3 7V3h4M13 3h4v4M17 13v4h-4M7 17H3v-4" strokeLinecap="butt" /></Ico>
      </button>
    </div>
  </footer>
);

const App = () => (
  <div className="flex h-screen -scale-x-100 flex-col overflow-hidden bg-[#f4f4f4] font-['Liberation_Sans','Noto_Sans_CJK_SC',sans-serif]">
    <TitleBar />
    <MenuBar />
    <ToolBar />
    <div className="flex min-h-0 flex-1">
      <Library />
      <main className="flex min-w-0 flex-1">
        <VRuler />
        <div className="flex min-w-0 flex-1 flex-col">
          <HRuler />
          <div className="flex min-h-0 flex-1">
            <div className="flex min-w-0 flex-1 flex-col">
              <div className="min-h-0 flex-1 overflow-hidden bg-[#e4e4e4]"><Page /></div>
              <div className="h-2 border-y border-[#d0d0d0] bg-[#e8e8e8] pl-[151px]">
                <div className="-my-px h-2 w-[487px] rounded border border-[#aaa] bg-[#b9b9b9]" />
              </div>
            </div>
            <div className="mb-2 w-2 border-x border-[#d0d0d0] bg-[#e8e8e8] pt-[45px]">
              <div className="-mx-px h-[532px] rounded border border-[#aaa] bg-[#b9b9b9]" />
            </div>
          </div>
        </div>
      </main>
      <SideBar />
      <FillPanel />
    </div>
    <StatusBar />
  </div>
);

export default App;
